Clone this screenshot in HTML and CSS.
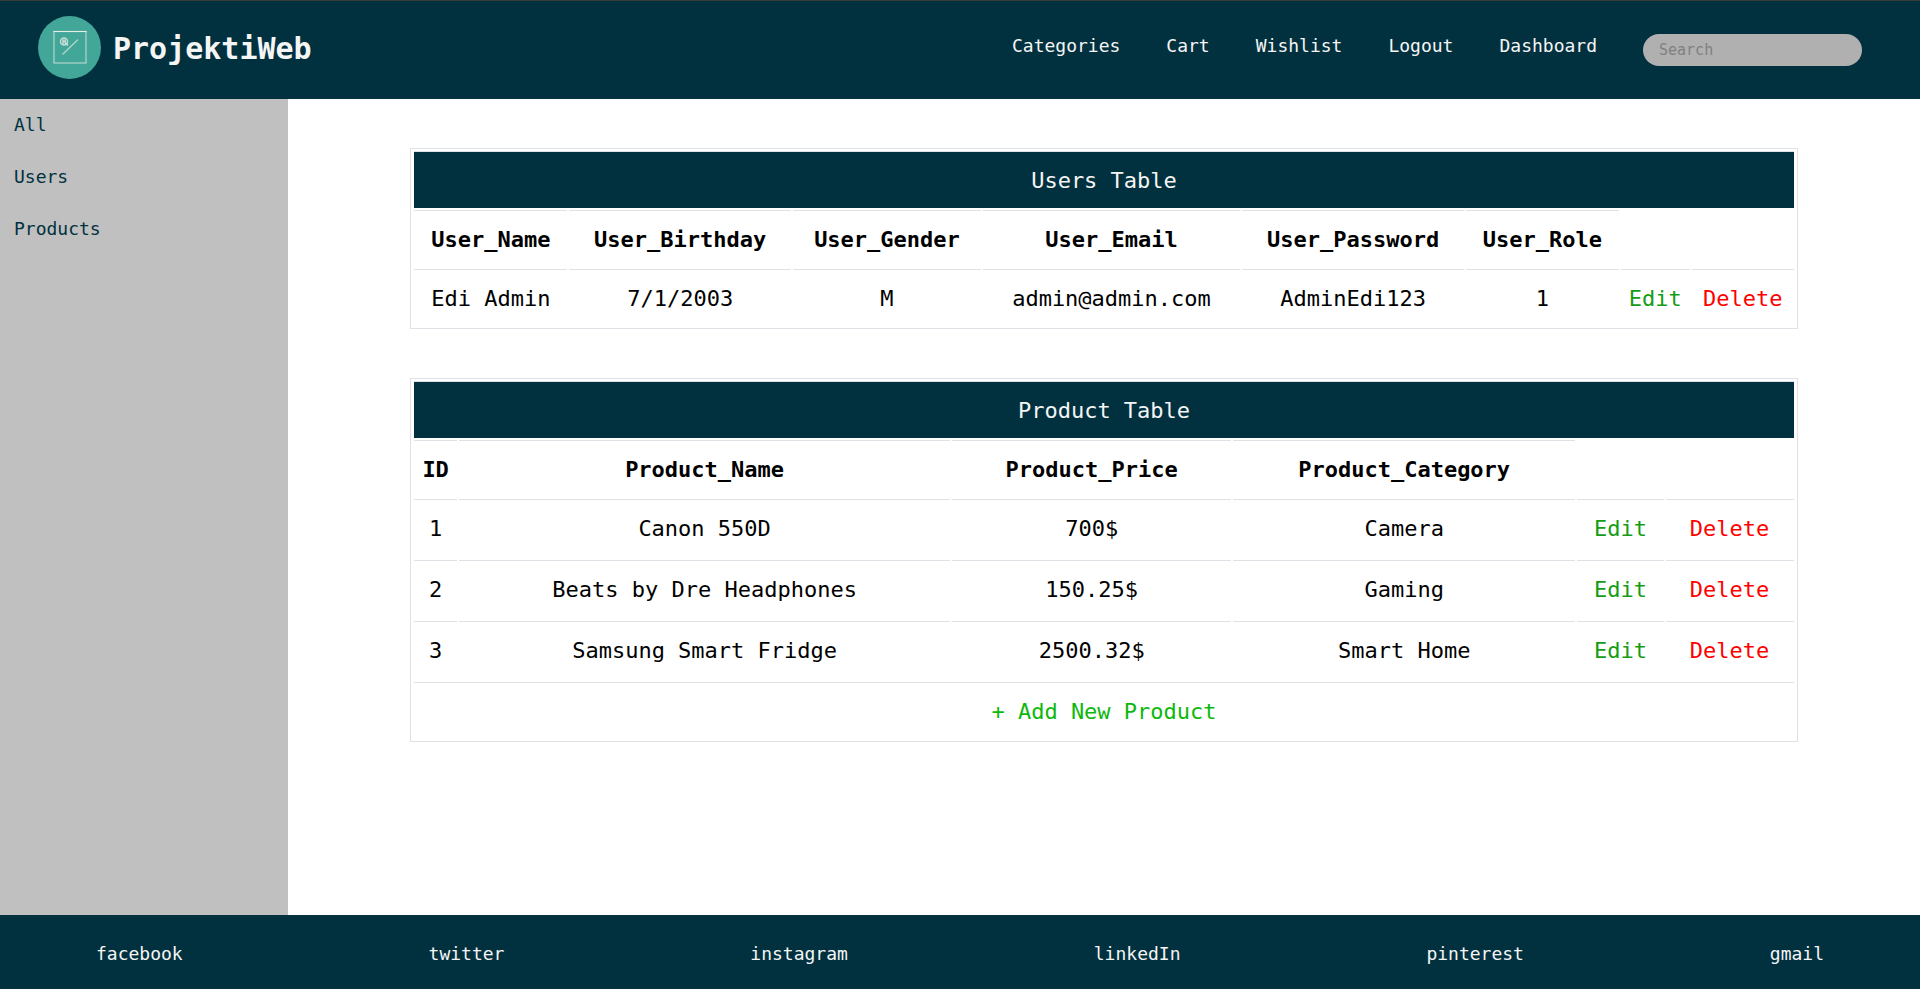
FILE: index.html
```html
<!DOCTYPE html>
<html lang="en">
<head>
<meta charset="utf-8">
<title>ProjektiWeb</title>
<link rel="stylesheet" href="styles.css">
</head>
<body>
<header class="header">
  <a class="brand" href="#">
    <svg class="logo" viewBox="0 0 63 63" aria-hidden="true">
      <circle cx="31.5" cy="31.5" r="31.5" fill="#42a698"/>
      <rect x="16" y="15.5" width="32" height="31.5" fill="none" stroke="#b4d6cc" stroke-width="1.2"/>
      <path d="M15.5 15.5h33" stroke="#e3efe4" stroke-width="1"/>
      <path d="M24.5 38.5L40 23.500" stroke="#b4d6cc" stroke-width="1.3"/>
      <circle cx="26" cy="25.500" r="3.500" fill="none" stroke="#c6ded6" stroke-width="1.500"/>
      <path d="M25 28v-4h2q1 1 0 2h-1.500M26.500 26l3.500 3.500" fill="none" stroke="#d5e8e0" stroke-width="1.200"/>
    </svg>
    <span class="brand-name">ProjektiWeb</span>
  </a>
  <nav class="nav">
    <a href="#">Categories</a>
    <a href="#">Cart</a>
    <a href="#">Wishlist</a>
    <a href="#">Logout</a>
    <a href="#">Dashboard</a>
    <input class="search" type="text" placeholder="Search" aria-label="Search">
  </nav>
</header>

<div class="body">
  <aside class="sidebar">
    <a href="#">All</a>
    <a href="#">Users</a>
    <a href="#">Products</a>
  </aside>
  <main class="main">
    <table class="table">
      <colgroup>
        <col class="user-name"><col class="user-birthday"><col class="user-gender"><col class="user-email">
        <col class="user-password"><col class="user-role"><col class="user-edit"><col class="user-delete">
      </colgroup>
      <thead>
        <tr><td class="title" colspan="8">Users Table</td></tr>
        <tr><th>User_Name</th><th>User_Birthday</th><th>User_Gender</th><th>User_Email</th><th>User_Password</th><th>User_Role</th></tr>
      </thead>
      <tbody>
        <tr><td>Edi Admin</td><td>7/1/2003</td><td>M</td><td>admin@admin.com</td><td>AdminEdi123</td><td>1</td><td><a class="edit" href="#">Edit</a></td><td><a class="delete" href="#">Delete</a></td></tr>
      </tbody>
    </table>

    <table class="table">
      <colgroup>
        <col class="product-id"><col class="product-name"><col class="product-price">
        <col class="product-category"><col class="product-edit"><col class="product-delete">
      </colgroup>
      <thead>
        <tr><td class="title" colspan="6">Product Table</td></tr>
        <tr><th>ID</th><th>Product_Name</th><th>Product_Price</th><th>Product_Category</th></tr>
      </thead>
      <tbody class="products">
        <tr><td>1</td><td>Canon 550D</td><td>700$</td><td>Camera</td><td><a class="edit" href="#">Edit</a></td><td><a class="delete" href="#">Delete</a></td></tr>
        <tr><td>2</td><td>Beats by Dre Headphones</td><td>150.25$</td><td>Gaming</td><td><a class="edit" href="#">Edit</a></td><td><a class="delete" href="#">Delete</a></td></tr>
        <tr><td>3</td><td>Samsung Smart Fridge</td><td>2500.32$</td><td>Smart Home</td><td><a class="edit" href="#">Edit</a></td><td><a class="delete" href="#">Delete</a></td></tr>
      </tbody>
      <tfoot>
        <tr><td colspan="6"><a class="add" href="#">+ Add New Product</a></td></tr>
      </tfoot>
    </table>
  </main>
</div>

<footer class="footer">
  <a href="#">facebook</a>
  <a href="#">twitter</a>
  <a href="#">instagram</a>
  <a href="#">linkedIn</a>
  <a href="#">pinterest</a>
  <a href="#">gmail</a>
</footer>
</body>
</html>
```

FILE: styles.css
```css
* {
  box-sizing: border-box;
}

body {
  margin: 0;
  min-height: 100vh;
  display: flex;
  flex-direction: column;
  background: #fff;
  color: #000;
  font-family: Consolas, "DejaVu Sans Mono", monospace;
  font-size: 18px;
  line-height: 24px;
}

a {
  color: inherit;
  text-decoration: none;
}

.header {
  display: flex;
  align-items: center;
  justify-content: space-between;
  padding: 15px 58px 20px 38px;
  border-top: 1px solid #3a3a3a;
  background: #01313f;
  color: #f5f5f5;
}

.brand {
  display: flex;
  align-items: center;
  gap: 12px;
}

.logo {
  width: 63px;
  height: 63px;
}

.brand-name {
  padding-top: 2px;
  font-size: 30px;
  font-weight: bold;
  line-height: 36px;
}

.nav {
  display: flex;
  align-items: flex-start;
  gap: 46px;
  padding-top: 4px;
}

.search {
  width: 219px;
  height: 32px;
  padding: 0 16px;
  border: 0;
  border-radius: 16px;
  background: #b0b0b0;
  color: #000;
  font-family: inherit;
  font-size: 15px;
}

.search::placeholder {
  color: #808080;
}

.body {
  flex: 1;
  display: flex;
}

.sidebar {
  width: 15%;
  display: flex;
  flex-direction: column;
  gap: 28px;
  padding: 14px;
  background: #c0c0c0;
  color: #01313f;
}

.main {
  flex: 1;
  display: flex;
  flex-direction: column;
  align-items: center;
  gap: 49px;
  padding: 49px 0;
}

.table {
  width: 85%;
  table-layout: fixed;
  border: 1px solid #dee2e6;
  border-collapse: separate;
  border-spacing: 2px;
  padding: 0 1px;
  font-size: 22px;
  line-height: 32px;
  text-align: center;
}

.table th,
.table td {
  padding: 13px 0 11px;
  border-top: 1px solid #dee2e6;
  white-space: nowrap;
}

.table .products td {
  padding: 13px 0;
}

.table .title {
  background: #01313f;
  color: #f5f5f5;
}

.user-name,
.user-role {
  width: 11.2%;
}

.user-birthday,
.user-password {
  width: 16.25%;
}

.user-gender {
  width: 13.75%;
}

.user-email {
  width: 18.85%;
}

.user-edit {
  width: 5.05%;
}

.user-delete {
  width: 7.45%;
}

.product-id {
  width: 3.1%;
}

.product-name {
  width: 35.9%;
}

.product-price {
  width: 20.35%;
}

.product-category {
  width: 25%;
}

.product-edit {
  width: 6.3%;
}

.product-delete {
  width: 9.35%;
}

.edit {
  color: #149c14;
}

.delete {
  color: #f00;
}

.add {
  color: #0db80d;
}

.footer {
  display: flex;
  justify-content: space-between;
  padding: 27px 5% 23px;
  background: #01313f;
  color: #f5f5f5;
}
```
